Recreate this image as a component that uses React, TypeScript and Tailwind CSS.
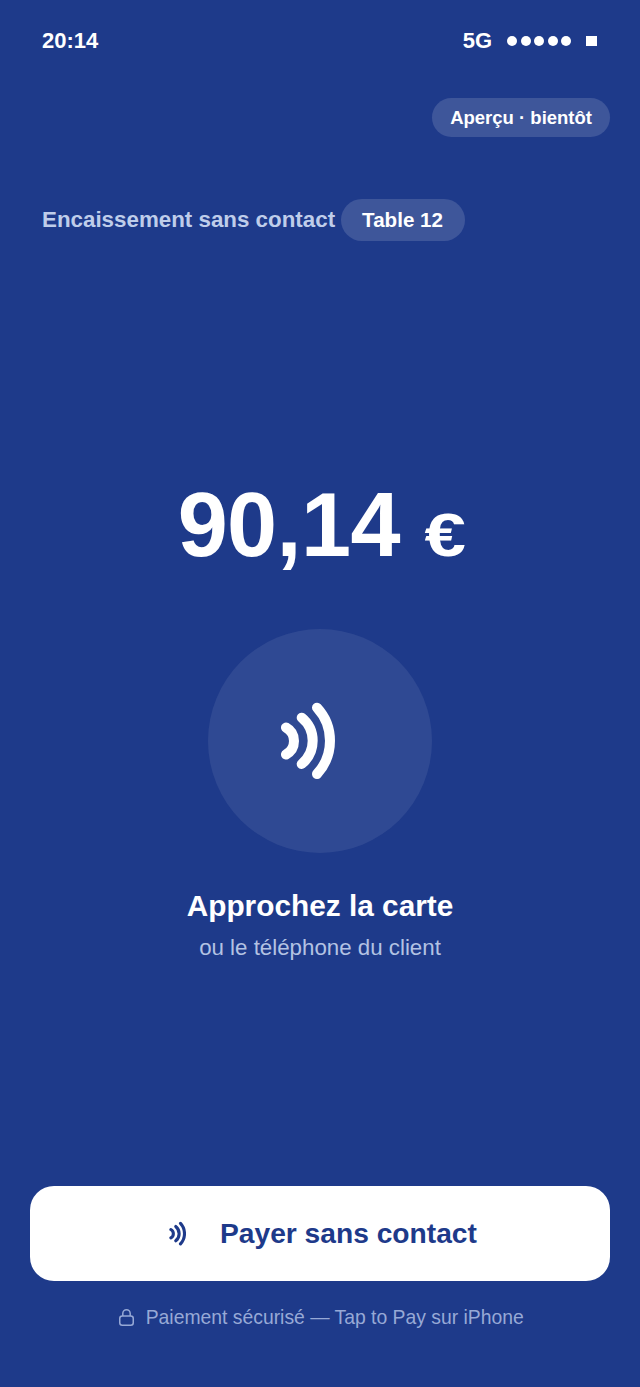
const font = "font-['Liberation_Sans',Arial,sans-serif]";

function Waves({ className }: { className: string }) {
  return (
    <svg viewBox="0 0 56 82" fill="none" stroke="currentColor" strokeWidth={10} strokeLinecap="round" className={className}>
      <path d="M6 27.5A15.4 15.4 0 0 1 6 54.5" />
      <path d="M21.7 17.7A29.9 29.9 0 0 1 21.7 64" />
      <path d="M37 7.7A48.8 48.8 0 0 1 37 74" />
    </svg>
  );
}

export default function App() {
  return (
    <div className={`${font} flex h-[1387px] w-[640px] flex-col overflow-hidden bg-[#1e3a8a] text-white`}>
      {/* Status bar */}
      <div className="flex items-center justify-between pl-[42px] pr-[43px] pt-[28px] text-[22px] font-bold leading-[26px]">
        <span>20:14</span>
        <div className="flex items-center">
          <span>5G</span>
          <span className="ml-[15px] flex gap-[3.5px]">
            <i className="h-[10px] w-[10px] rounded-full bg-white" />
            <i className="h-[10px] w-[10px] rounded-full bg-white" />
            <i className="h-[10px] w-[10px] rounded-full bg-white" />
            <i className="h-[10px] w-[10px] rounded-full bg-white" />
            <i className="h-[10px] w-[10px] rounded-full bg-white" />
          </span>
          <i className="ml-[15px] h-[10px] w-[11px] bg-white" />
        </div>
      </div>

      <div className="mt-[44px] flex justify-end pr-[30px]">
        <span className="flex h-[39px] items-center rounded-full bg-white/[0.14] px-[18px] text-[18.5px] font-bold">Aperçu · bientôt</span>
      </div>

      <div className="mt-[62px] flex items-center pl-[42px]">
        <span className="text-[22.35px] font-bold text-[#bfcdea]">Encaissement sans contact</span>
        <span className="ml-[6px] flex h-[42px] items-center rounded-[21px] bg-white/[0.14] pl-[21px] pr-[22px] text-[20.6px] font-bold">Table 12</span>
      </div>

      <div className="mt-[229px] flex items-baseline justify-center">
        <span className="text-[90px] font-bold leading-[110px] tracking-[-0.6px]">90,14</span>
        <span className="ml-[28px] inline-block scale-x-[1.2] text-[62px] font-bold leading-none">€</span>
      </div>

      <div className="mt-[49px] flex h-[224px] w-[224px] items-center justify-center self-center rounded-full bg-white/[0.08]">
        <Waves className="ml-[-24px] h-[82px] w-[56px]" />
      </div>

      <p className="mt-[35px] text-center text-[29.8px] font-bold leading-[36px]">Approchez la carte</p>
      <p className="mt-[11px] text-center text-[22.3px] leading-[26px] text-[#b3c2e3]">ou le téléphone du client</p>

      <div className="mt-[225px] px-[30px]">
        <button className="flex h-[95px] w-full items-center rounded-[24px] bg-white pl-[139px] text-[28.2px] font-bold text-[#1e3a8a]">
          <Waves className="h-[25.4px] w-[17.4px]" />
          <span className="ml-[33.6px]">Payer sans contact</span>
        </button>
      </div>

      <div className="mt-[22px] flex items-center justify-center pl-[3px] text-[19.35px] text-[#97a9d6]">
        <svg viewBox="0 0 15 17" fill="none" stroke="currentColor" strokeWidth="1.5" className="mr-[11.5px] h-[17px] w-[15px]">
          <rect x="0.75" y="7" width="13.5" height="9.25" rx="2.5" />
          <path d="M3.8 7V4.5a3.7 3.7 0 0 1 7.4 0V7" />
        </svg>
        <span>Paiement sécurisé — Tap to Pay sur iPhone</span>
      </div>
    </div>
  );
}
